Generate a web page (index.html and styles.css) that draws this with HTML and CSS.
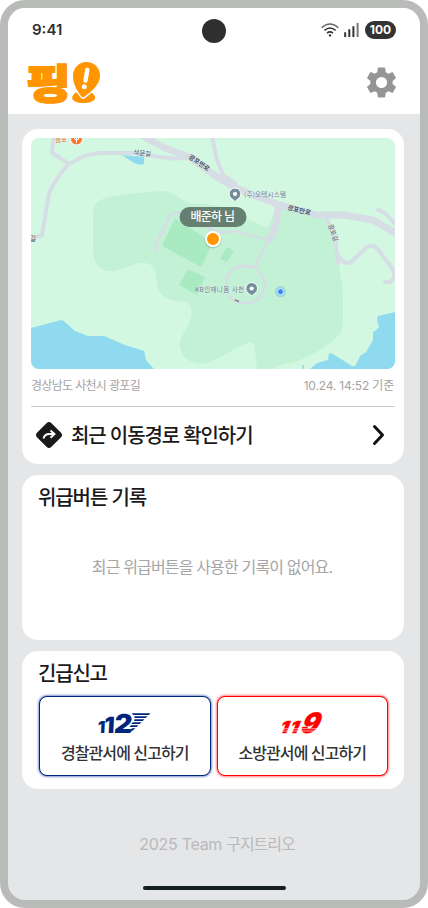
FILE: index.html
```html
<!DOCTYPE html>
<html lang="ko">
<head>
<meta charset="utf-8">
<title>핑!</title>
<link rel="stylesheet" href="styles.css">
</head>
<body>
<div class="phone">
  <header class="top">
    <div class="status">
      <span class="time">9:41</span>
      <span class="camera"></span>
      <div class="signals">
        <svg class="wifi" viewBox="0 0 18 14" fill="none" stroke="#333" stroke-width="1.5"><path d="M.7 4.7Q9-2.6 17.3 4.7" stroke="#666"/><path d="M3.4 7.4Q9 2.6 14.6 7.4M6 10.1Q9 7.6 12 10.1"/><circle cx="9" cy="12.4" r="1.2" fill="#333" stroke="none"/></svg>
        <svg class="cell" viewBox="0 0 15 14" fill="#333"><path d="M.2 9.3h2V14h-2zM4.3 6.2h2V14h-2zM8.4 3.3h2V14h-2z"/><path d="M12.6 0h2v14h-2z" fill="#777"/></svg>
        <span class="battery">100</span>
      </div>
    </div>
    <div class="brand">
      <svg class="logo" viewBox="27 60 76 46">
        <text class="logo-text" transform="translate(26 98.200) scale(1.13 .92)">핑</text>
        <path d="M76 92.500C69 97 71.500 103 83.500 103s14.500-6 8-10.500z" fill="#ff9500"/>
        <path d="M86.500 62C79 62 73 68 73 76c0 8 4.500 16 9 21l1.500.5C88 94 100 86 100 75.500 100 67.500 94 62 86.500 62z" fill="#ff9500" stroke="#fff" stroke-width="2.800" paint-order="stroke"/>
        <path d="M87.300 69.800 85.500 80.500" stroke="#fff" stroke-width="4.400" stroke-linecap="round"/>
        <circle cx="84.300" cy="86.800" r="2.500" fill="#fff"/>
      </svg>
      <svg class="gear" viewBox="2 2 20 20" fill="#959595"><path d="M19.140 12.940c.04-.3.06-.61.06-.94 0-.32-.02-.64-.07-.94l2.030-1.580a.49.49 0 0 0 .12-.61l-1.920-3.320a.488.488 0 0 0-.59-.22l-2.390.96c-.5-.38-1.030-.7-1.620-.94l-.36-2.540A.484.484 0 0 0 13.920 2.400h-3.840c-.24 0-.43.17-.47.41l-.36 2.540c-.59.24-1.130.57-1.620.94l-2.390-.96c-.22-.08-.47 0-.59.22L2.740 8.870c-.12.21-.08.47.12.61l2.030 1.580c-.05.3-.09.63-.09.94s.02.64.07.94l-2.030 1.580a.49.49 0 0 0-.12.61l1.920 3.320c.12.22.37.29.59.22l2.390-.96c.5.38 1.030.7 1.620.94l.36 2.540c.05.24.24.41.48.41h3.840c.24 0 .44-.17.47-.41l.36-2.540c.59-.24 1.130-.56 1.620-.94l2.390.96c.22.08.47 0 .59-.22l1.920-3.320a.49.49 0 0 0-.12-.61zM12 15.600a3.600 3.600 0 1 1 0-7.200 3.600 3.600 0 0 1 0 7.200z"/></svg>
    </div>
  </header>

  <main class="content">
    <section class="card location">
      <svg class="map" viewBox="31 138 364 231">
        <path fill="#d2f8e1" d="M31 138h364v231H31z"/>
        <path fill="#c3f1d5" d="M93 250V215C93 203 97 200 109 197 130 193 145 193 160 191 177 190 181 204 195 204 218 201 240 216 268 228L277 205 327 220 338 255C339 275 343 280 343 293V323Q343 333 334 340C322 350 303 360 292 363Q280 364 273 369H257L255 349Q255 340 247 343L210 362C192 369 175 353 181 338 185 331 194 318 191 307 189 299 170 302 165 297 152 288 160 271 151 265 139 258 124 271 110 271Q94 271 93 250z"/>
        <g fill="#a9eac3"><path d="M175 218 162 246 201 267 213 243zM188 269l17 8-8 18-18-10zM227 247l7 4-7 11-7-3z"/></g>
        <g fill="#90daf0"><path d="M31 328 59 320.500Q62 319 66 323L75 331 88 336 104 336 125 345 144 351 146 360 154 369H31zM395 312 378 316Q376 318 379 327 376 331 373 332V340L366 352 360 356Q357 363 355 366H352L333 354 329 353 328 360 317 363 310 369H395zM122 155 144 157V164Q138 166 131 161zM302.500 365h1.500v4h-1.500z"/></g>
        <g class="road">
          <path stroke-width="4" d="M53.500 136 52 153 69 164M31 239 42 235 49 193Q59 173 69 164L84 156 99 153H132L172 158.500 189 158M212 136 217 160 223 175 235 183"/>
          <path stroke-width="7" d="M141 135 165 148 189 157 213 174Q227 185 253 195L277 204 317 215 343 215 373 220 399 235M278 207 277 222 270 239"/>
          <path stroke-width="4" d="M378 210 385 213 397 226M327 219 335 238 338 263M338 255Q342 264 350 263L367 247Q372 244 377 248L392 268Q398 276 390 282H385"/>
          <path stroke-width="2.600" d="M155 251 156 244 170 216Q173 212 180 213L212 230 223 233 235 231 268 240 255 267M237 267Q249 264 256 269 265 276 265 286 263 301 248 303 231 304 227 291 224 272 237 267z"/>
        </g>
        <g class="map-label">
          <text x="55" y="141.500" fill="#e97125">점포</text>
          <text transform="translate(133 154.500) rotate(7)">석문길</text>
          <text class="bold" transform="translate(188 158) rotate(34)">광포만로</text>
          <text class="bold" transform="translate(287 209.500) rotate(14)">광포만로</text>
          <text transform="translate(328 225) rotate(70)">광포길</text>
          <text x="30" y="241">길</text>
          <text x="244" y="197" textLength="42" class="place">(주)오텍시스템</text>
          <text x="195" y="292" textLength="49" class="place">KB인재니움 사천</text>
        </g>
        <g stroke="#fff"><path d="M70.500 139a6 6 0 0 0 12 0q0-3-3-6h-6q-3 3-3 6z" fill="#f8792c"/><path d="M74.500 136v3q2 2 4 0v-3M76.500 136v7" fill="none"/></g>
        <g fill="#758e9c" stroke="#fff" stroke-width="1"><path d="M235 201.500q-1-1.300-3-2.500a5.900 5.900 0 1 1 6 0q-2 1.200-3 2.500zM251.700 296q-1-1.300-3-2.500a5.900 5.900 0 1 1 6 0q-2 1.200-3 2.500z"/></g>
        <g fill="#fff"><circle cx="235" cy="194" r="2.100"/><circle cx="251.700" cy="288.500" r="2.100"/></g>
        <circle cx="280.500" cy="291.700" r="5.600" fill="#9cd8dc"/><circle cx="280.500" cy="291.700" r="3" fill="#3b82f6" stroke="#d6ecff"/>
        <path d="M235 300l4 1.500" stroke="#7b8792" stroke-width="1.500"/>
        <rect x="179.500" y="207" width="67" height="20" rx="10" fill="#60796a" fill-opacity=".95"/>
        <text class="person" x="190.500" y="221" textLength="44.500">배준하 님</text>
        <circle cx="213" cy="240" r="8.500" fill="#527860" opacity=".25"/>
        <circle cx="213" cy="239" r="7" fill="#ff9500" stroke="#fff" stroke-width="2"/>
      </svg>
      <div class="meta"><span class="address">경상남도 사천시 광포길</span><span class="stamp">10.24. 14:52 기준</span></div>
      <div class="route">
        <svg class="turn" viewBox="0 0 28 28"><rect x="3.900" y="3.900" width="20.200" height="20.200" rx="3.500" transform="rotate(45 14 14)" fill="#1a1a1a"/><path d="M8.500 17.500q1-4.500 6-4.500h4M15.500 9.500 19.500 13l-4 3.700" fill="none" stroke="#fff" stroke-width="1.900"/></svg>
        <span class="title route-title">최근 이동경로 확인하기</span>
        <svg class="chevron" viewBox="0 0 14 22"><path d="M2.500 2.500 10.500 11 2.500 19.500" fill="none" stroke="#111" stroke-width="3" stroke-linecap="round" stroke-linejoin="round"/></svg>
      </div>
    </section>

    <section class="card history">
      <h2 class="title">위급버튼 기록</h2>
      <p class="empty">최근 위급버튼을 사용한 기록이 없어요.</p>
    </section>

    <section class="card report">
      <h2 class="title">긴급신고</h2>
      <div class="buttons">
        <button class="call police">
          <svg class="mark" viewBox="98 710 56 24">
            <g class="police-num"><text transform="translate(98.500 732.700) skewX(-3)" font-size="16.500">1</text><text transform="translate(105 732.700) skewX(-3)" font-size="22.500">1</text><text transform="translate(114.500 732.700) skewX(-6) scale(1.060 1)" font-size="26">2</text></g>
            <path d="M132.500 713.200H151.500L149.800 715H134.500zM135.500 716.200H148.500L146.700 718H135.500zM135.500 719.200H145.500L143.700 721H135zM134 722.200H142.500L140.700 724H132zM132 725.200H139.500L137.700 727H130.500zM133 728.200H136.500L131 732.600H129z" fill="#00257a"/>
          </svg>
          <span>경찰관서에 신고하기</span>
        </button>
        <button class="call fire">
          <svg class="mark" viewBox="275 710 56 24">
            <g class="fire-num"><text transform="translate(279.600 732.700) skewX(-22) scale(1.150 1)" font-size="16.500">1</text><text transform="translate(289.600 732.700) skewX(-22) scale(1.150 1)" font-size="16.500">1</text><text transform="translate(299.500 732.500) skewX(-24) scale(.95 1)" font-size="28">9</text></g>
            <path d="M278 728.700h42M278 731h42" stroke="#fff" stroke-width=".6"/>
          </svg>
          <span>소방관서에 신고하기</span>
        </button>
      </div>
    </section>
  </main>
  <footer class="bottom"><p class="team">2025 Team <span>구지트리오</span></p><div class="home-bar"></div></footer>
</div>
</body>
</html>
```
FILE: styles.css
```css
* { box-sizing: border-box; margin: 0; padding: 0; }
body { background: #fff; font-family: Inter, "Noto Sans CJK KR", sans-serif; color: #1a1a1a; }
svg { display: block; flex: none; }
.phone { width: 428px; height: 908px; border: 8px solid #b9bbb9; border-radius: 25px; background: #e5e6e8; overflow: hidden; display: flex; flex-direction: column; }
.top { height: 106px; flex: none; background: #fff; }
.status { height: 44px; display: grid; grid-template-columns: 1fr 24px 1fr; align-items: center; padding: 1px 24px 0; }
.time { font-size: 15px; font-weight: 600; line-height: 20px; color: #2f2f2f; margin-top: -1px; }
.camera { width: 24px; height: 24px; border-radius: 50%; background: #2f2f2f; }
.signals { display: flex; justify-content: flex-end; align-items: center; margin-top: -1px; }
.wifi { width: 18px; height: 14px; margin-right: 5px; }
.cell { width: 15px; height: 14px; margin-right: 6px; }
.battery { width: 31px; height: 18px; border-radius: 9px; background: #333; color: #fff; font-size: 12px; line-height: 18px; font-weight: 700; text-align: center; }
.brand { display: flex; justify-content: space-between; align-items: center; padding: 8px 23px 0 19px; }
.logo { width: 76px; height: 46px; overflow: visible; }
.logo-text { font: 900 43px "Noto Sans CJK KR", sans-serif; fill: #ff9500; stroke: #ff9500; stroke-width: 2px; }
.gear { width: 31px; height: 31px; margin-top: -2px; }
.content { padding: 15px 16px 0 14px; display: flex; flex-direction: column; gap: 11px; }
.card { background: #fff; border-radius: 16px; flex: none; }
.location { height: 335px; padding: 9px 9px 0; }
.map { width: 364px; height: 231px; border-radius: 8px; }
.road { fill: none; stroke: #d6dde5; stroke-linecap: round; stroke-linejoin: round; }
.map-label { font: 6.500px "Noto Sans CJK KR", sans-serif; fill: #414c5d; stroke: #e9f6ef; stroke-width: .5px; paint-order: stroke; }
.map-label .bold { font-weight: 700; }
.map-label .place { fill: #63788b; }
.person { font: 500 12px "Noto Sans CJK KR", sans-serif; fill: #fff; }
.meta { display: flex; justify-content: space-between; height: 38px; padding-right: 1px; line-height: 33px; font-size: 12px; color: #a3a3a3; border-bottom: 1px solid #ccc; }
.address { letter-spacing: -.68px; }
.stamp { letter-spacing: -.18px; }
.route { height: 57px; display: flex; align-items: center; padding: 0 9px 0 4px; }
.turn { width: 28px; height: 28px; margin: 0 8px 2px 0; }
.chevron { width: 14px; height: 22px; margin: 0 0 2px auto; }
.title { font-size: 20px; line-height: 28px; font-weight: 500; letter-spacing: -1.100px; }
.history { height: 165px; padding: 9px 16px 0; }
.empty { margin-top: 41px; padding-right: 2px; text-align: center; font-size: 16px; line-height: 28px; letter-spacing: -.84px; color: #a5a5a5; }
.report { height: 138px; padding: 9px 16px 0 17px; }
.report .title { letter-spacing: -1.200px; margin-left: -1px; }
.buttons { display: flex; gap: 6px; margin-top: 8px; }
.call { flex: 1; height: 80px; border-radius: 8px; background: #fff; font: 500 16px/24px Inter, "Noto Sans CJK KR", sans-serif; letter-spacing: -.9px; color: #333; display: flex; flex-direction: column; align-items: center; padding-top: 13px; gap: 7px; }
.police { border: 1px solid #00257a; box-shadow: 0 0 3px #00259a; }
.fire { border: 1px solid #f00; box-shadow: 0 0 3px #f00; }
.mark { width: 56px; height: 24px; overflow: visible; }
.police-num { font-family: Inter, sans-serif; font-weight: 900; fill: #00257a; }
.fire-num { font-family: Inter, sans-serif; font-weight: 900; fill: #f00; stroke: #f00; stroke-width: .4px; }
.bottom { margin-top: auto; display: flex; flex-direction: column; align-items: center; padding-bottom: 10px; }
.team { font-size: 16px; line-height: 24px; letter-spacing: -.3px; color: #b8b9bb; padding-left: 6px; }
.team span { letter-spacing: -1.050px; }
.home-bar { margin-top: 30px; width: 143px; height: 4px; border-radius: 2px; background: #17201e; }
```
